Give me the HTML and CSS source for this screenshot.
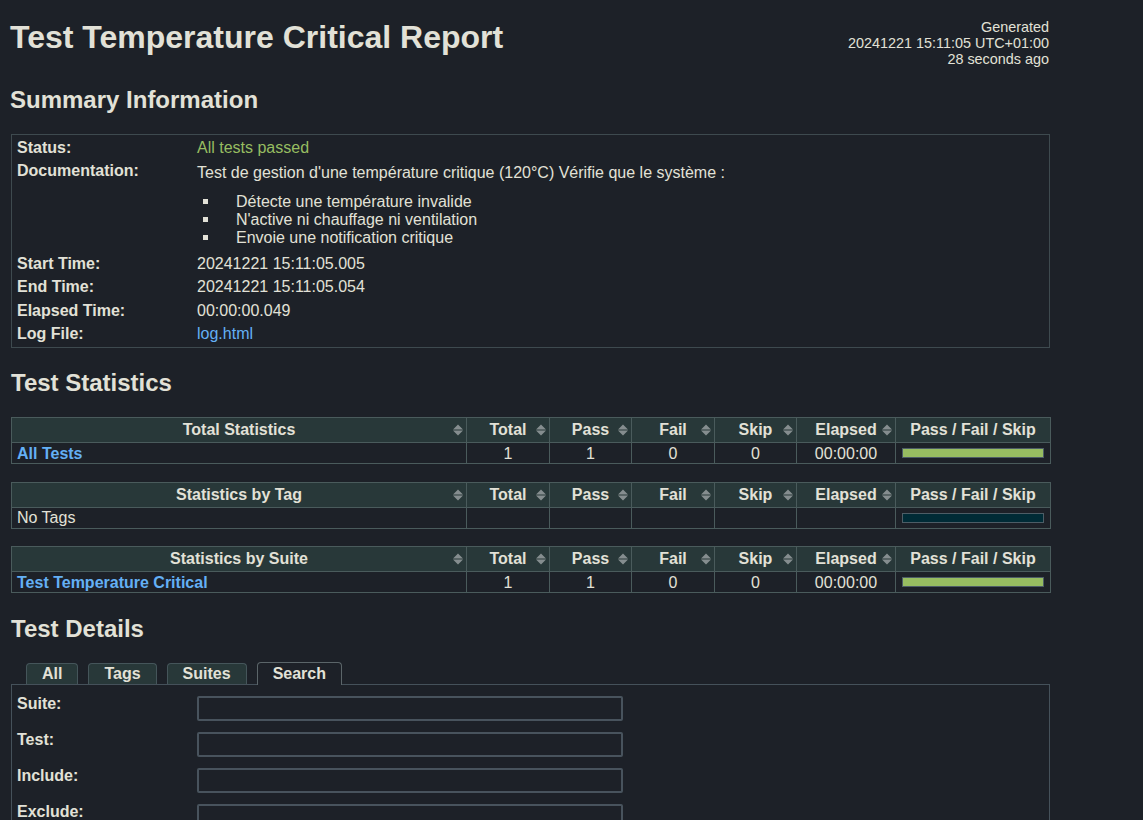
FILE: index.html
```html
<!DOCTYPE html>
<html lang="fr">
<head>
<meta charset="utf-8">
<title>Test Temperature Critical Report</title>
<link rel="stylesheet" href="styles.css">
</head>
<body>
<div class="page">
  <header class="header">
    <h1 class="title">Test Temperature Critical Report</h1>
    <div class="generated">Generated<br>20241221 15:11:05 UTC+01:00<br>28 seconds ago</div>
  </header>

  <h2 class="section-title first">Summary Information</h2>
  <table class="summary">
    <tr><th>Status:</th><td class="pass-text">All tests passed</td></tr>
    <tr><th>Documentation:</th><td>
      <div class="doc">
        <p>Test de gestion d'une température critique (120°C) Vérifie que le système :</p>
        <ul>
          <li>Détecte une température invalide</li>
          <li>N'active ni chauffage ni ventilation</li>
          <li>Envoie une notification critique</li>
        </ul>
      </div>
    </td></tr>
    <tr><th>Start Time:</th><td>20241221 15:11:05.005</td></tr>
    <tr><th>End Time:</th><td>20241221 15:11:05.054</td></tr>
    <tr><th>Elapsed Time:</th><td>00:00:00.049</td></tr>
    <tr><th>Log File:</th><td><a class="link" href="#">log.html</a></td></tr>
  </table>

  <h2 class="section-title">Test Statistics</h2>

  <table class="stats">
    <colgroup><col class="c-name"><col class="c-num"><col class="c-num2"><col class="c-num"><col class="c-num2"><col class="c-el"><col class="c-graph"></colgroup>
    <thead><tr>
      <th class="sortable">Total Statistics<svg class="sort" viewBox="0 0 10 12"><path d="M0 5.5 L5 0.5 L10 5.5Z M0 6.5 L5 11.5 L10 6.5Z"/></svg></th>
      <th class="sortable">Total<svg class="sort" viewBox="0 0 10 12"><path d="M0 5.5 L5 0.5 L10 5.5Z M0 6.5 L5 11.5 L10 6.5Z"/></svg></th>
      <th class="sortable">Pass<svg class="sort" viewBox="0 0 10 12"><path d="M0 5.5 L5 0.5 L10 5.5Z M0 6.5 L5 11.5 L10 6.5Z"/></svg></th>
      <th class="sortable">Fail<svg class="sort" viewBox="0 0 10 12"><path d="M0 5.5 L5 0.5 L10 5.5Z M0 6.5 L5 11.5 L10 6.5Z"/></svg></th>
      <th class="sortable">Skip<svg class="sort" viewBox="0 0 10 12"><path d="M0 5.5 L5 0.5 L10 5.5Z M0 6.5 L5 11.5 L10 6.5Z"/></svg></th>
      <th class="sortable">Elapsed<svg class="sort" viewBox="0 0 10 12"><path d="M0 5.5 L5 0.5 L10 5.5Z M0 6.5 L5 11.5 L10 6.5Z"/></svg></th>
      <th>Pass / Fail / Skip</th>
    </tr></thead>
    <tbody><tr>
      <td class="name"><a class="link strong" href="#">All Tests</a></td>
      <td>1</td><td>1</td><td>0</td><td>0</td><td>00:00:00</td>
      <td class="graph"><div class="bar"><div class="bar-pass" style="width:100%"></div></div></td>
    </tr></tbody>
  </table>

  <table class="stats">
    <colgroup><col class="c-name"><col class="c-num"><col class="c-num2"><col class="c-num"><col class="c-num2"><col class="c-el"><col class="c-graph"></colgroup>
    <thead><tr>
      <th class="sortable">Statistics by Tag<svg class="sort" viewBox="0 0 10 12"><path d="M0 5.5 L5 0.5 L10 5.5Z M0 6.5 L5 11.5 L10 6.5Z"/></svg></th>
      <th class="sortable">Total<svg class="sort" viewBox="0 0 10 12"><path d="M0 5.5 L5 0.5 L10 5.5Z M0 6.5 L5 11.5 L10 6.5Z"/></svg></th>
      <th class="sortable">Pass<svg class="sort" viewBox="0 0 10 12"><path d="M0 5.5 L5 0.5 L10 5.5Z M0 6.5 L5 11.5 L10 6.5Z"/></svg></th>
      <th class="sortable">Fail<svg class="sort" viewBox="0 0 10 12"><path d="M0 5.5 L5 0.5 L10 5.5Z M0 6.5 L5 11.5 L10 6.5Z"/></svg></th>
      <th class="sortable">Skip<svg class="sort" viewBox="0 0 10 12"><path d="M0 5.5 L5 0.5 L10 5.5Z M0 6.5 L5 11.5 L10 6.5Z"/></svg></th>
      <th class="sortable">Elapsed<svg class="sort" viewBox="0 0 10 12"><path d="M0 5.5 L5 0.5 L10 5.5Z M0 6.5 L5 11.5 L10 6.5Z"/></svg></th>
      <th>Pass / Fail / Skip</th>
    </tr></thead>
    <tbody><tr>
      <td class="name">No Tags</td>
      <td></td><td></td><td></td><td></td><td></td>
      <td class="graph"><div class="bar empty"></div></td>
    </tr></tbody>
  </table>

  <table class="stats">
    <colgroup><col class="c-name"><col class="c-num"><col class="c-num2"><col class="c-num"><col class="c-num2"><col class="c-el"><col class="c-graph"></colgroup>
    <thead><tr>
      <th class="sortable">Statistics by Suite<svg class="sort" viewBox="0 0 10 12"><path d="M0 5.5 L5 0.5 L10 5.5Z M0 6.5 L5 11.5 L10 6.5Z"/></svg></th>
      <th class="sortable">Total<svg class="sort" viewBox="0 0 10 12"><path d="M0 5.5 L5 0.5 L10 5.5Z M0 6.5 L5 11.5 L10 6.5Z"/></svg></th>
      <th class="sortable">Pass<svg class="sort" viewBox="0 0 10 12"><path d="M0 5.5 L5 0.5 L10 5.5Z M0 6.5 L5 11.5 L10 6.5Z"/></svg></th>
      <th class="sortable">Fail<svg class="sort" viewBox="0 0 10 12"><path d="M0 5.5 L5 0.5 L10 5.5Z M0 6.5 L5 11.5 L10 6.5Z"/></svg></th>
      <th class="sortable">Skip<svg class="sort" viewBox="0 0 10 12"><path d="M0 5.5 L5 0.5 L10 5.5Z M0 6.5 L5 11.5 L10 6.5Z"/></svg></th>
      <th class="sortable">Elapsed<svg class="sort" viewBox="0 0 10 12"><path d="M0 5.5 L5 0.5 L10 5.5Z M0 6.5 L5 11.5 L10 6.5Z"/></svg></th>
      <th>Pass / Fail / Skip</th>
    </tr></thead>
    <tbody><tr>
      <td class="name"><a class="link strong" href="#">Test Temperature Critical</a></td>
      <td>1</td><td>1</td><td>0</td><td>0</td><td>00:00:00</td>
      <td class="graph"><div class="bar"><div class="bar-pass" style="width:100%"></div></div></td>
    </tr></tbody>
  </table>

  <h2 class="section-title details">Test Details</h2>

  <div class="tabs">
    <span class="tab">All</span>
    <span class="tab">Tags</span>
    <span class="tab">Suites</span>
    <span class="tab active">Search</span>
  </div>
  <div class="panel">
    <table class="search-form">
      <tr><th>Suite:</th><td><input class="search-input" type="text"></td></tr>
      <tr><th>Test:</th><td><input class="search-input" type="text"></td></tr>
      <tr><th>Include:</th><td><input class="search-input" type="text"></td></tr>
      <tr><th>Exclude:</th><td><input class="search-input" type="text"></td></tr>
    </table>
  </div>
</div>
</body>
</html>
```

FILE: styles.css
```css
html, body {
  margin: 0;
  background: #1d2128;
}

body {
  color: #e2e1d7;
  font-family: "Liberation Sans", Arial, sans-serif;
  font-size: 16px;
}

.page {
  width: 1040px;
  margin-left: 10px;
  padding-top: 19px;
}

.header {
  display: flex;
  justify-content: space-between;
  align-items: flex-start;
  height: 48px;
}

.title {
  margin: 0;
  font-size: 32px;
  line-height: 37px;
  font-weight: bold;
}

.generated {
  font-size: 14.4px;
  line-height: 16px;
  text-align: right;
  margin-right: 1px;
}

.section-title {
  font-size: 24px;
  line-height: 28px;
  margin: 21px 0 20px 1px;
  font-weight: bold;
}

.section-title.first {
  margin-top: 19px;
  margin-left: 0;
}

.section-title.details {
  margin-top: 21.5px;
  margin-bottom: 19px;
}

.link {
  color: #64b0f5;
  text-decoration: none;
}

.link.strong {
  font-weight: bold;
}

.pass-text {
  color: #97bd61;
}

/* Summary */
.summary {
  width: 1039px;
  margin-left: 1px;
  border: 1px solid #3e4a4f;
  border-collapse: separate;
  border-spacing: 0;
  padding: 1px 0 2px;
}

.summary th {
  width: 180px;
  padding: 2px 0 2px 5px;
  text-align: left;
  vertical-align: top;
  font-weight: bold;
  line-height: 19.4px;
}

.summary td {
  padding: 2px 6px 2px 0;
  vertical-align: top;
  line-height: 19.4px;
}

.doc p {
  margin: 2px 0 0;
}

.doc ul {
  margin: 10px 0 3px;
  padding-left: 6px;
  list-style: none;
  line-height: 18px;
}

.doc li::before {
  content: "";
  display: inline-block;
  width: 5px;
  height: 5px;
  margin: 0 28px 0 0;
  vertical-align: 3px;
  background: currentColor;
}

/* Statistics */
.stats {
  width: 1039px;
  margin-left: 1px;
  table-layout: fixed;
  border-collapse: collapse;
  margin-bottom: 17.4px;
}

.c-name { width: 455px; }
.c-num { width: 83px; }
.c-num2 { width: 82px; }
.c-el { width: 99px; }
.c-graph { width: 155px; }

.stats th {
  position: relative;
  height: 24px;
  padding: 0 4px;
  background: #283839;
  border: 1px solid #4a5b5c;
  font-weight: bold;
  text-align: center;
  line-height: 20px;
  white-space: nowrap;
}

.stats .sort {
  position: absolute;
  right: 3px;
  top: 50%;
  width: 10px;
  height: 12px;
  margin-top: -6px;
  fill: #858d8f;
}

.stats td {
  height: 20px;
  padding: 0 6px;
  border: 1px solid #4a5b5c;
  text-align: center;
  line-height: 19px;
}

.stats td.name {
  text-align: left;
  padding-left: 5px;
}

.stats td.graph {
  padding: 0 6px 0 6px;
}

.bar {
  height: 8px;
  border: 1px solid #4d5d66;
  background: #002b36;
}

.bar-pass {
  height: 100%;
  background: #97bd61;
}

/* Tabs */
.tabs {
  display: flex;
  align-items: flex-end;
  gap: 10px;
  margin-left: 1px;
  padding-left: 15px;
  height: 22px;
  position: relative;
  z-index: 1;
}

.tab {
  box-sizing: border-box;
  height: 21px;
  padding: 0 15px;
  background: #283839;
  border: 1px solid #45555a;
  border-bottom: none;
  border-radius: 4px 4px 0 0;
  font-weight: bold;
  line-height: 20px;
}

.tab.active {
  height: 23px;
  margin-bottom: -1px;
  background: #1d2128;
  border-color: #5b6569;
  line-height: 22px;
}

.panel {
  margin-left: 1px;
  border: 1px solid #45515a;
  padding-bottom: 60px;
}

.search-form {
  border-collapse: collapse;
}

.search-form th {
  width: 180px;
  padding: 9px 0 0 5px;
  text-align: left;
  vertical-align: top;
  font-weight: bold;
  line-height: 19px;
}

.search-form td {
  padding: 11px 0 0 0;
  vertical-align: top;
}

.search-input {
  display: block;
  box-sizing: border-box;
  width: 426px;
  height: 25px;
  margin: 0;
  background: #1d2128;
  border: 2px solid #48535d;
  border-radius: 2px;
  color: #e2e1d7;
}
```
